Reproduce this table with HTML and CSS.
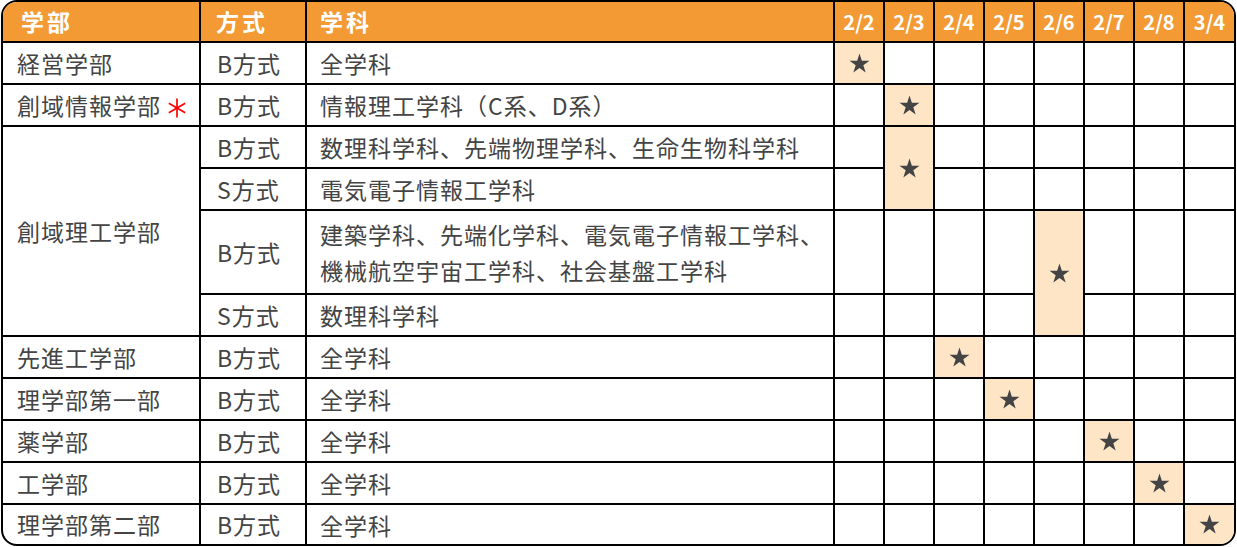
FILE: index.html
```html
<!DOCTYPE html>
<html lang="ja">
<head>
<meta charset="utf-8">
<link rel="stylesheet" href="styles.css">
</head>
<body>
<div class="sched">
<table class="grid">
<thead>
<tr class="hrow">
<th class="c-fac">学部</th><th class="c-met">方式</th><th class="c-dep">学科</th>
<th class="c-d">2/2</th><th class="c-d">2/3</th><th class="c-d">2/4</th><th class="c-d">2/5</th><th class="c-d">2/6</th><th class="c-d">2/7</th><th class="c-d">2/8</th><th class="c-d c-last">3/4</th>
</tr>
</thead>
<tbody>
<tr>
<td class="fac">経営学部</td><td class="met">B方式</td><td class="dep">全学科</td>
<td class="d on"><svg class="star" viewBox="0 0 20 19"><polygon points="10,0.5 12.25,7.41 19.51,7.41 13.63,11.68 15.88,18.59 10,14.32 4.12,18.59 6.37,11.68 0.49,7.41 7.75,7.41"/></svg></td><td class="d"></td><td class="d"></td><td class="d"></td><td class="d"></td><td class="d"></td><td class="d"></td><td class="d"></td>
</tr>
<tr>
<td class="fac">創域情報学部<svg class="mark" viewBox="0 0 18 20"><line x1="9" y1="0.5" x2="9" y2="19.5"/><line x1="0.8" y1="5.25" x2="17.2" y2="14.75"/><line x1="0.8" y1="14.75" x2="17.2" y2="5.25"/></svg></td><td class="met">B方式</td><td class="dep">情報理工学科（C系、D系）</td>
<td class="d"></td><td class="d on"><svg class="star" viewBox="0 0 20 19"><polygon points="10,0.5 12.25,7.41 19.51,7.41 13.63,11.68 15.88,18.59 10,14.32 4.12,18.59 6.37,11.68 0.49,7.41 7.75,7.41"/></svg></td><td class="d"></td><td class="d"></td><td class="d"></td><td class="d"></td><td class="d"></td><td class="d"></td>
</tr>
<tr>
<td class="fac" rowspan="4">創域理工学部</td><td class="met">B方式</td><td class="dep">数理科学科、先端物理学科、生命生物科学科</td>
<td class="d"></td><td class="d on" rowspan="2"><svg class="star" viewBox="0 0 20 19"><polygon points="10,0.5 12.25,7.41 19.51,7.41 13.63,11.68 15.88,18.59 10,14.32 4.12,18.59 6.37,11.68 0.49,7.41 7.75,7.41"/></svg></td><td class="d"></td><td class="d"></td><td class="d"></td><td class="d"></td><td class="d"></td><td class="d"></td>
</tr>
<tr>
<td class="met">S方式</td><td class="dep">電気電子情報工学科</td>
<td class="d"></td><td class="d"></td><td class="d"></td><td class="d"></td><td class="d"></td><td class="d"></td><td class="d"></td>
</tr>
<tr class="tall">
<td class="met">B方式</td><td class="dep">建築学科、先端化学科、電気電子情報工学科、<br>機械航空宇宙工学科、社会基盤工学科</td>
<td class="d"></td><td class="d"></td><td class="d"></td><td class="d"></td><td class="d on" rowspan="2"><svg class="star" viewBox="0 0 20 19"><polygon points="10,0.5 12.25,7.41 19.51,7.41 13.63,11.68 15.88,18.59 10,14.32 4.12,18.59 6.37,11.68 0.49,7.41 7.75,7.41"/></svg></td><td class="d"></td><td class="d"></td><td class="d"></td>
</tr>
<tr>
<td class="met">S方式</td><td class="dep">数理科学科</td>
<td class="d"></td><td class="d"></td><td class="d"></td><td class="d"></td><td class="d"></td><td class="d"></td><td class="d"></td>
</tr>
<tr>
<td class="fac">先進工学部</td><td class="met">B方式</td><td class="dep">全学科</td>
<td class="d"></td><td class="d"></td><td class="d on"><svg class="star" viewBox="0 0 20 19"><polygon points="10,0.5 12.25,7.41 19.51,7.41 13.63,11.68 15.88,18.59 10,14.32 4.12,18.59 6.37,11.68 0.49,7.41 7.75,7.41"/></svg></td><td class="d"></td><td class="d"></td><td class="d"></td><td class="d"></td><td class="d"></td>
</tr>
<tr>
<td class="fac">理学部第一部</td><td class="met">B方式</td><td class="dep">全学科</td>
<td class="d"></td><td class="d"></td><td class="d"></td><td class="d on"><svg class="star" viewBox="0 0 20 19"><polygon points="10,0.5 12.25,7.41 19.51,7.41 13.63,11.68 15.88,18.59 10,14.32 4.12,18.59 6.37,11.68 0.49,7.41 7.75,7.41"/></svg></td><td class="d"></td><td class="d"></td><td class="d"></td><td class="d"></td>
</tr>
<tr>
<td class="fac">薬学部</td><td class="met">B方式</td><td class="dep">全学科</td>
<td class="d"></td><td class="d"></td><td class="d"></td><td class="d"></td><td class="d"></td><td class="d on"><svg class="star" viewBox="0 0 20 19"><polygon points="10,0.5 12.25,7.41 19.51,7.41 13.63,11.68 15.88,18.59 10,14.32 4.12,18.59 6.37,11.68 0.49,7.41 7.75,7.41"/></svg></td><td class="d"></td><td class="d"></td>
</tr>
<tr>
<td class="fac">工学部</td><td class="met">B方式</td><td class="dep">全学科</td>
<td class="d"></td><td class="d"></td><td class="d"></td><td class="d"></td><td class="d"></td><td class="d"></td><td class="d on"><svg class="star" viewBox="0 0 20 19"><polygon points="10,0.5 12.25,7.41 19.51,7.41 13.63,11.68 15.88,18.59 10,14.32 4.12,18.59 6.37,11.68 0.49,7.41 7.75,7.41"/></svg></td><td class="d"></td>
</tr>
<tr class="last">
<td class="fac">理学部第二部</td><td class="met">B方式</td><td class="dep">全学科</td>
<td class="d"></td><td class="d"></td><td class="d"></td><td class="d"></td><td class="d"></td><td class="d"></td><td class="d"></td><td class="d on"><svg class="star" viewBox="0 0 20 19"><polygon points="10,0.5 12.25,7.41 19.51,7.41 13.63,11.68 15.88,18.59 10,14.32 4.12,18.59 6.37,11.68 0.49,7.41 7.75,7.41"/></svg></td>
</tr>
</tbody>
</table>
</div>
</body>
</html>
```
FILE: styles.css
```css
html, body {
  margin: 0;
  padding: 0;
  background: #fff;
}
body {
  font-family: "Noto Sans CJK JP", "Noto Sans", sans-serif;
  color: #444;
}
.sched {
  box-sizing: border-box;
  width: 1235px;
  height: 546px;
  margin-left: 1px;
  border: 2px solid #000;
  border-radius: 16px;
  overflow: hidden;
}
.grid {
  width: 1231px;
  table-layout: fixed;
  border-collapse: separate;
  border-spacing: 0;
}
.grid th, .grid td {
  box-sizing: border-box;
  padding: 0;
  border-right: 2px solid #000;
  border-bottom: 2px solid #000;
  vertical-align: middle;
  white-space: nowrap;
}
.grid th:last-child, .grid td:last-child {
  border-right: 0;
}
.grid tr.last td {
  border-bottom: 0;
}
.hrow th {
  height: 41px;
  background: #f39a34;
  color: #fff;
  font-weight: 700;
  font-size: 23px;
  letter-spacing: 3px;
  text-align: left;
  line-height: 1;
}
.hrow .c-fac { width: 198px; padding-left: 18px; }
.hrow .c-met { width: 106px; padding-left: 15px; }
.hrow .c-dep { width: 528px; padding-left: 13px; }
.hrow .c-d {
  width: 50px;
  text-align: center;
  font-size: 20px;
  letter-spacing: 0;
  padding-left: 0;
}
.hrow .c-last { width: 49px; }
.grid tbody tr { height: 42px; }
.grid tbody tr.tall { height: 84px; }
.grid tbody tr.last { height: 39px; }
.grid td {
  font-size: 23px;
  line-height: 1.5;
  letter-spacing: 1px;
}
.grid td.fac { padding-left: 14px; }
.grid td.met { padding-left: 16px; }
.grid td.dep { padding-left: 13px; line-height: 36px; }
.grid td.d { text-align: center; letter-spacing: 0; }
.grid td.on { background: #fde5c6; }
.star {
  display: block;
  margin: -1px auto 0;
  width: 21px;
  height: 20px;
  fill: #444;
}
.mark {
  display: inline-block;
  width: 18px;
  height: 20px;
  margin-left: 7px;
  vertical-align: -3px;
  stroke: #f00;
  stroke-width: 1.7;
  fill: none;
}
```
